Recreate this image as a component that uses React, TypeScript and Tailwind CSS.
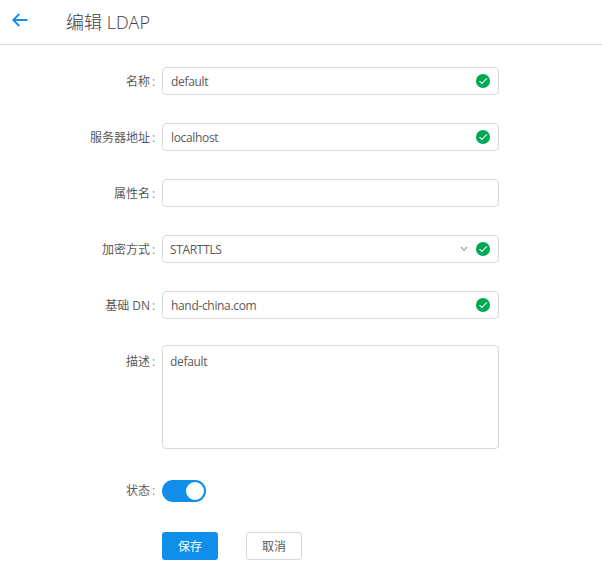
import type { ReactNode } from 'react';

function CheckBadge() {
  return (
    <svg width="14" height="14" viewBox="0 0 14 14" className="shrink-0">
      <circle cx="7" cy="7" r="7" fill="#00a854" />
      <path d="M3.5 7.2 5.8 9.5 10.9 4.4" fill="none" stroke="#e0f5e8" strokeWidth="1.2" />
    </svg>
  );
}

function Row({ label, children, className = 'h-7' }: { label: ReactNode; children: ReactNode; className?: string }) {
  return (
    <div className={`flex ${className}`}>
      <div className="flex h-7 w-[162px] shrink-0 items-center justify-end whitespace-pre pr-[7px] pt-0.5">
        {label}
        <span className="w-[5px] pl-0.5 text-[#8a8a8a]">:</span>
      </div>
      {children}
    </div>
  );
}

function Box({ value, valid, select }: { value?: string; valid?: boolean; select?: boolean }) {
  return (
    <div className={`flex h-7 w-[337px] items-center rounded-[4px] border border-[#d9d9d9] pr-2 ${select ? 'pl-[7px]' : 'pl-2'}`}>
      <span className="flex-1 pt-0.5 tracking-[-0.33px]">{value}</span>
      {select && (
        <svg width="8" height="6" viewBox="0 0 8 6" className="mr-2">
          <path d="M1 1 4 4.5 7 1" fill="none" stroke="#777" strokeWidth="1" />
        </svg>
      )}
      {valid && <CheckBadge />}
    </div>
  );
}

export default function App() {
  return (
    <div className="h-[588px] w-[602px] overflow-hidden bg-white font-['Open_Sans','Noto_Sans_CJK_SC',sans-serif] text-[12px] leading-[18px] text-[#595959]">
      <header className="flex h-[45px] items-center border-b border-[#dcdcdc] pl-3">
        <svg width="16" height="14" viewBox="0 0 16 14" className="-mt-1">
          <path d="M15.5 7H1.5M7.3 1 1.3 7l6 6" fill="none" stroke="#108ee9" strokeWidth="1.8" />
        </svg>
        <h1 className="ml-[38px] text-[18px] font-light leading-6 text-[#404040]">编辑 LDAP</h1>
      </header>
      <main className="flex flex-col gap-7 pt-[22px]">
        <Row label="名称"><Box value="default" valid /></Row>
        <Row label="服务器地址"><Box value="localhost" valid /></Row>
        <Row label="属性名"><Box /></Row>
        <Row label="加密方式"><Box value="STARTTLS" valid select /></Row>
        <Row label="基础 DN"><Box value="hand-china.com" valid /></Row>
        <Row label="描述" className="h-[101px]">
          <div className="-mt-0.5 h-[104px] w-[337px] rounded-[4px] border border-[#d9d9d9] px-[7px] py-[7px] tracking-[-0.33px]">default</div>
        </Row>
        <Row label="状态">
          <div className="mt-1 flex h-[22px] w-11 items-center justify-end rounded-full bg-[#108ee9] pr-0.5">
            <div className="size-[18px] rounded-full bg-white" />
          </div>
        </Row>
        <div className="flex gap-7 pl-[162px]">
          <button className="h-7 w-14 rounded-[3px] bg-[#108ee9] pt-0.5 text-white">保存</button>
          <button className="h-7 w-14 rounded-[3px] border border-[#d9d9d9] pt-0.5">取消</button>
        </div>
      </main>
    </div>
  );
}
